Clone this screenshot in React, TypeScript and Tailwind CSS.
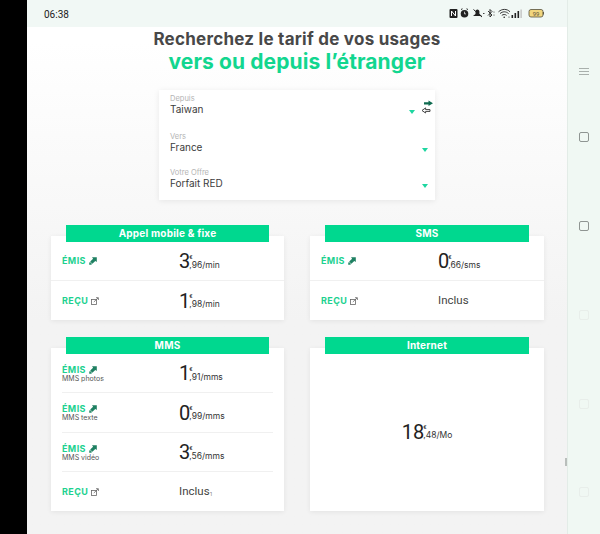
import React from "react";

const SANS = "font-['Inter','Liberation_Sans',sans-serif]";

function ArrowOut({ className = "" }: { className?: string }) {
  return (
    <svg width="8" height="8" viewBox="0 0 8 8" className={className}>
      <path d="M3 0.2H7.8V5L6.3 3.9L3.4 6.8L1.2 4.6L4.1 1.7Z" fill="#1f8062" />
      <rect x="0.2" y="5.4" width="2.4" height="2.4" fill="#2f8f6f" />
    </svg>
  );
}

function BoxIn() {
  return (
    <svg width="8" height="8" viewBox="0 0 8 8" fill="none" stroke="#666" strokeWidth="0.8">
      <rect x="0.5" y="2.4" width="5" height="5" />
      <path d="M2.8 5L7 1M5 0.7H7.4V3" />
    </svg>
  );
}

function Price({ n, c, u }: { n: string; c: string; u: string }) {
  return (
    <div className="flex items-center text-[#222]">
      <span className="font-['Roboto',sans-serif] text-[20px] leading-[22px]">{n}</span>
      <span className="flex flex-col -ml-[1px]">
        <span className="text-[6px] leading-[7px] font-['Roboto',sans-serif]">€</span>
        <span className={`${SANS} text-[8.5px] leading-[10px] text-[#333]`}>
          {c}/{u}
        </span>
      </span>
    </div>
  );
}

function Label({ kind, sub }: { kind: "e" | "r"; sub?: string }) {
  return (
    <div className="w-[117px] shrink-0">
      <div className="flex items-center gap-[3px] h-[10px]">
        <span className={`${SANS} text-[9px] font-bold tracking-[0.4px] text-[#1dd18f] leading-[10px]`}>
          {kind === "e" ? "ÉMIS" : "REÇU"}
        </span>
        {kind === "e" ? <ArrowOut /> : <BoxIn />}
      </div>
      {sub && <div className={`${SANS} text-[7px] leading-[7px] text-[#555]`}>{sub}</div>}
    </div>
  );
}

function Row({ children, divider, h, inset }: { children: React.ReactNode; divider?: boolean; h: string; inset?: boolean }) {
  return (
    <div className={`${h} ${inset ? "mx-[11px]" : "px-[11px]"} flex items-center ${divider ? "border-b border-[#f0f0f0]" : ""}`}>
      {children}
    </div>
  );
}

function Card({ title, children, height }: { title: string; children: React.ReactNode; height: string }) {
  return (
    <div className="flex flex-col">
      <div className={`relative z-10 mx-[15px] h-[17px] bg-[#00d88f] text-white text-[10px] font-bold text-center leading-[17px] tracking-[0.2px] ${SANS}`}>
        {title}
      </div>
      <div className={`${height} -mt-[6px] pt-[6px] bg-white shadow-[0_1px_5px_rgba(0,0,0,0.07)] flex flex-col`}>{children}</div>
    </div>
  );
}

function Field({ label, value, h, pr }: { label: string; value: string; h: string; pr: string }) {
  return (
    <div className={`${h} pl-[11px] ${pr} flex items-start justify-between`}>
      <div className={SANS}>
        <div className="text-[7.5px] leading-[8px] text-[#b4b4b4]">{label}</div>
        <div className="text-[10px] leading-[12px] text-[#3c3c3c]">{value}</div>
      </div>
      <div className="mt-[15px] w-0 h-0 border-l-[3.5px] border-r-[3.5px] border-t-[4px] border-l-transparent border-r-transparent border-t-[#1dd6a0]" />
    </div>
  );
}

function StatusIcons() {
  return (
    <div className="flex items-center gap-[3px]">
      <svg width="95" height="11" viewBox="0 0 95 11" fill="none">
        <rect x="0.5" y="1" width="8" height="9" rx="1" fill="#222" />
        <path d="M2.5 8V3L6.5 8V3" stroke="#fff" strokeWidth="1" />
        <circle cx="15.5" cy="5.7" r="3.8" fill="#222" />
        <path d="M12 1.5L13.5 0.8M19 1.5L17.5 0.8" stroke="#222" />
        <path d="M15.5 3.7V5.9H17" stroke="#fff" strokeWidth="0.7" />
        <path d="M24 8L26.5 6V3.6C26.5 2.4 27.5 1.6 28.4 1.6C29.6 1.6 30.4 2.6 30.4 3.6V6L33 8Z" fill="#222" />
        <path d="M24.5 1.5L33 9" stroke="#222" />
        <path d="M34 5.5L35.5 5.5" stroke="#444" />
        <path d="M39 3L43 7L41 9V1.5L43 3.5L39 7.5" stroke="#222" strokeWidth="0.9" />
        <circle cx="45" cy="4" r="0.5" fill="#222" />
        <circle cx="45" cy="7" r="0.5" fill="#222" />
        <path d="M49.5 3.8C53 0.6 58 0.6 61 3.8M51 5.6C53.8 3.2 56.8 3.2 59.6 5.6M52.8 7.4C54.2 6.2 56.2 6.2 57.6 7.4" stroke="#222" strokeWidth="0.9" />
        <circle cx="55.2" cy="9.2" r="0.8" fill="#222" />
        <circle cx="60" cy="9" r="0.6" fill="#222" />
        <rect x="62.5" y="7" width="1.6" height="3" fill="#222" />
        <rect x="65.5" y="5" width="1.6" height="5" fill="#222" />
        <rect x="68.5" y="3" width="1.6" height="7" fill="#222" />
        <rect x="71.5" y="1.5" width="1.2" height="8.5" fill="#bbb" />
        <rect x="80" y="1.5" width="14" height="7.5" rx="2" fill="#f1d67e" stroke="#55503c" strokeWidth="0.8" />
        <path d="M94.4 4V6.5" stroke="#55503c" />
        <text x="87" y="7.6" textAnchor="middle" fontSize="6" fontFamily="Roboto, sans-serif" fill="#55503c">99</text>
      </svg>
    </div>
  );
}

function Rail() {
  const sq = "w-[10px] h-[10px] rounded-[2px] border";
  return (
    <div className="w-[33px] shrink-0 bg-[#f0f8f3] border-l border-[#e3ece7] flex flex-col items-center pt-[68px] pr-[1px]">
      <div className="flex flex-col gap-[2px] w-[10px]">
        <div className="h-px bg-[#a9b0ac]" />
        <div className="h-px bg-[#a9b0ac]" />
        <div className="h-px bg-[#a9b0ac]" />
      </div>
      <div className={`${sq} mt-[57px] border-[#8f9592]`} />
      <div className={`${sq} mt-[79px] border-[#8f9592]`} />
      <div className={`${sq} mt-[79px] border-[#e8eeea]`} />
      <div className={`${sq} mt-[79px] border-[#e8eeea]`} />
      <div className={`${sq} mt-[78px] border-[#e8eeea]`} />
    </div>
  );
}

export default function App() {
  return (
    <div className="w-[600px] h-[534px] flex overflow-hidden bg-black">
      <div className="w-[27px] shrink-0 bg-black" />
      <div className="relative flex-1 flex flex-col bg-gradient-to-b from-white from-[8%] to-[#f3f3f3] to-[60%]">
        <div className="h-[27px] shrink-0 bg-[#f1f8f5] flex items-center justify-between pl-[17px] pr-[23px]">
          <span className="font-['Roboto',sans-serif] text-[10px] pt-[2px] text-[#222]">06:38</span>
          <StatusIcons />
        </div>

        <div className={`${SANS} text-center pt-[2px]`}>
          <div className="text-[17px] leading-[20px] font-bold tracking-[0.25px] text-[#484848]">Recherchez le tarif de vos usages</div>
          <div className="text-[21px] leading-[24px] font-bold tracking-[0.1px] text-[#12d68f] mt-[1px]">vers ou depuis l’étranger</div>
        </div>

        <div className="relative mt-[16px] ml-[132px] w-[276px] h-[110px] pt-[5px] bg-white shadow-[0_1px_6px_rgba(0,0,0,0.08)]">
          <Field label="Depuis" value="Taiwan" h="h-[38px]" pr="pr-[20px]" />
          <Field label="Vers" value="France" h="h-[36px]" pr="pr-[7px]" />
          <Field label="Votre Offre" value="Forfait RED" h="h-[31px]" pr="pr-[7px]" />
          <svg width="13" height="14" viewBox="0 0 13 14" className="absolute left-[262px] top-[10px]">
            <path d="M3 2.2H7.5V0.4L12 3.2L7.5 6V4.4H3Z" fill="#0f6b50" />
            <path d="M9 9.6H4.6V7.9L1 10.5L4.6 13V11.4H9Z" fill="#fff" stroke="#444" strokeWidth="1" />
          </svg>
        </div>

        <div className="grid grid-cols-[233px_234px] gap-x-[26px] gap-y-[17px] ml-[24px] mt-[25px]">
          <Card title="Appel mobile & fixe" height="h-[84px]">
            <Row h="h-[39px]" divider>
              <Label kind="e" />
              <Price n="3" c=",96" u="min" />
            </Row>
            <Row h="h-[39px]">
              <Label kind="r" />
              <Price n="1" c=",98" u="min" />
            </Row>
          </Card>
          <Card title="SMS" height="h-[84px]">
            <Row h="h-[39px]" divider>
              <Label kind="e" />
              <Price n="0" c=",66" u="sms" />
            </Row>
            <Row h="h-[39px]">
              <Label kind="r" />
              <span className="font-['Roboto',sans-serif] text-[11.5px] text-[#444]">Inclus</span>
            </Row>
          </Card>
          <Card title="MMS" height="h-[163px]">
            <Row h="h-[39px]" divider inset>
              <Label kind="e" sub="MMS photos" />
              <Price n="1" c=",91" u="mms" />
            </Row>
            <Row h="h-[40px]" divider inset>
              <Label kind="e" sub="MMS texte" />
              <Price n="0" c=",99" u="mms" />
            </Row>
            <Row h="h-[39px]" divider inset>
              <Label kind="e" sub="MMS vidéo" />
              <Price n="3" c=",56" u="mms" />
            </Row>
            <Row h="h-[39px]" inset>
              <Label kind="r" />
              <span className="font-['Roboto',sans-serif] text-[11.5px] text-[#444]">
                Inclus<sub className="text-[6px] text-[#888]">1</sub>
              </span>
            </Row>
          </Card>
          <Card title="Internet" height="h-[163px]">
            <div className="flex-1 flex items-center justify-center pb-[2px]">
              <Price n="18" c=",48" u="Mo" />
            </div>
          </Card>
        </div>

        <div className="absolute right-0 top-[458px] w-[2px] h-[8px] bg-[#b9bebb]" />
      </div>
      <Rail />
    </div>
  );
}
